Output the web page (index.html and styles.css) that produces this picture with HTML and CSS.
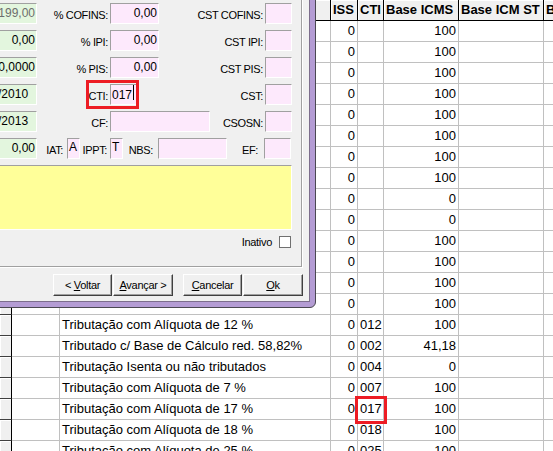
FILE: index.html
```html
<!DOCTYPE html>
<html lang="pt-BR">
<head>
<meta charset="utf-8">
<title>Tributação</title>
<link rel="stylesheet" href="styles.css">
</head>
<body>
<div class="grid">
  <div class="row head"><div class="c ind"></div><div class="c"></div><div class="c"></div><div class="c">ISS</div><div class="c">CTI</div><div class="c">Base ICMS</div><div class="c">Base ICM ST</div><div class="c">B</div></div>
  <div class="row"><div class="c ind"></div><div class="c"></div><div class="c"></div><div class="c r">0</div><div class="c"></div><div class="c r">100</div><div class="c"></div><div class="c"></div></div>
  <div class="row"><div class="c ind"></div><div class="c"></div><div class="c"></div><div class="c r">0</div><div class="c"></div><div class="c r">100</div><div class="c"></div><div class="c"></div></div>
  <div class="row"><div class="c ind"></div><div class="c"></div><div class="c"></div><div class="c r">0</div><div class="c"></div><div class="c r">100</div><div class="c"></div><div class="c"></div></div>
  <div class="row"><div class="c ind"></div><div class="c"></div><div class="c"></div><div class="c r">0</div><div class="c"></div><div class="c r">100</div><div class="c"></div><div class="c"></div></div>
  <div class="row"><div class="c ind"></div><div class="c"></div><div class="c"></div><div class="c r">0</div><div class="c"></div><div class="c r">100</div><div class="c"></div><div class="c"></div></div>
  <div class="row"><div class="c ind"></div><div class="c"></div><div class="c"></div><div class="c r">0</div><div class="c"></div><div class="c r">100</div><div class="c"></div><div class="c"></div></div>
  <div class="row"><div class="c ind"></div><div class="c"></div><div class="c"></div><div class="c r">0</div><div class="c"></div><div class="c r">100</div><div class="c"></div><div class="c"></div></div>
  <div class="row"><div class="c ind"></div><div class="c"></div><div class="c"></div><div class="c r">0</div><div class="c"></div><div class="c r">100</div><div class="c"></div><div class="c"></div></div>
  <div class="row"><div class="c ind"></div><div class="c"></div><div class="c"></div><div class="c r">0</div><div class="c"></div><div class="c r">0</div><div class="c"></div><div class="c"></div></div>
  <div class="row"><div class="c ind"></div><div class="c"></div><div class="c"></div><div class="c r">0</div><div class="c"></div><div class="c r">0</div><div class="c"></div><div class="c"></div></div>
  <div class="row"><div class="c ind"></div><div class="c"></div><div class="c"></div><div class="c r">0</div><div class="c"></div><div class="c r">100</div><div class="c"></div><div class="c"></div></div>
  <div class="row"><div class="c ind"></div><div class="c"></div><div class="c"></div><div class="c r">0</div><div class="c"></div><div class="c r">100</div><div class="c"></div><div class="c"></div></div>
  <div class="row"><div class="c ind"></div><div class="c"></div><div class="c"></div><div class="c r">0</div><div class="c"></div><div class="c r">100</div><div class="c"></div><div class="c"></div></div>
  <div class="row"><div class="c ind"></div><div class="c"></div><div class="c"></div><div class="c r">0</div><div class="c"></div><div class="c r">100</div><div class="c"></div><div class="c"></div></div>
  <div class="row"><div class="c ind"></div><div class="c"></div><div class="c">Tributação com Alíquota de 12 %</div><div class="c r">0</div><div class="c">012</div><div class="c r">100</div><div class="c"></div><div class="c"></div></div>
  <div class="row"><div class="c ind"></div><div class="c"></div><div class="c">Tributado c/ Base de Cálculo red. 58,82%</div><div class="c r">0</div><div class="c">002</div><div class="c r">41,18</div><div class="c"></div><div class="c"></div></div>
  <div class="row"><div class="c ind"></div><div class="c"></div><div class="c">Tributação Isenta ou não tributados</div><div class="c r">0</div><div class="c">004</div><div class="c r">0</div><div class="c"></div><div class="c"></div></div>
  <div class="row"><div class="c ind"></div><div class="c"></div><div class="c">Tributação com Alíquota de 7 %</div><div class="c r">0</div><div class="c">007</div><div class="c r">100</div><div class="c"></div><div class="c"></div></div>
  <div class="row"><div class="c ind"></div><div class="c"></div><div class="c">Tributação com Alíquota de 17 %</div><div class="c r">0</div><div class="c">017</div><div class="c r">100</div><div class="c"></div><div class="c"></div></div>
  <div class="row"><div class="c ind"></div><div class="c"></div><div class="c">Tributação com Alíquota de 18 %</div><div class="c r">0</div><div class="c">018</div><div class="c r">100</div><div class="c"></div><div class="c"></div></div>
  <div class="row"><div class="c ind"></div><div class="c"></div><div class="c">Tributação com Alíquota de 25 %</div><div class="c r">0</div><div class="c">025</div><div class="c r">100</div><div class="c"></div><div class="c"></div></div>
</div>

<div class="dialog">
  <div class="client">
    <div class="panel">
      <div class="frow">
        <div class="fld g f-green num dis">199,00</div>
        <div class="lbl l-a">% COFINS:</div>
        <div class="fld p f-mid num">0,00</div>
        <div class="lbl l-b">CST COFINS:</div>
        <div class="fld p f-sm"></div>
      </div>
      <div class="frow">
        <div class="fld g f-green num">0,00</div>
        <div class="lbl l-a">% IPI:</div>
        <div class="fld p f-mid num">0,00</div>
        <div class="lbl l-b">CST IPI:</div>
        <div class="fld p f-sm"></div>
      </div>
      <div class="frow">
        <div class="fld g f-green num">10,0000</div>
        <div class="lbl l-a">% PIS:</div>
        <div class="fld p f-mid num">0,00</div>
        <div class="lbl l-b">CST PIS:</div>
        <div class="fld p f-sm"></div>
      </div>
      <div class="frow">
        <div class="fld g f-green date">01/01/2010</div>
        <div class="lbl l-a">CTI:</div>
        <div class="fld p f-sm cti">017<span class="caret"></span></div>
        <div class="lbl l-cst">CST:</div>
        <div class="fld p f-sm"></div>
      </div>
      <div class="frow">
        <div class="fld g f-green date">01/01/2013</div>
        <div class="lbl l-a">CF:</div>
        <div class="fld p f-cf"></div>
        <div class="lbl l-csosn">CSOSN:</div>
        <div class="fld p f-sm"></div>
      </div>
      <div class="frow">
        <div class="fld g f-green num">0,00</div>
        <div class="lbl l-iat">IAT:</div>
        <div class="fld p f-ch top">A</div>
        <div class="lbl l-ippt">IPPT:</div>
        <div class="fld p f-ch top">T</div>
        <div class="lbl l-nbs">NBS:</div>
        <div class="fld p f-nbs"></div>
        <div class="lbl l-ef">EF:</div>
        <div class="fld p f-sm"></div>
      </div>
      <div class="memo"></div>
      <div class="chkrow">
        <span class="chklbl">Inativo</span>
        <span class="chk"></span>
      </div>
    </div>
    <div class="btns">
      <div class="btn b59">&lt; <u>V</u>oltar</div>
      <div class="btn b60 adj"><u>A</u>vançar &gt;</div>
      <div class="btn b59 sep"><u>C</u>ancelar</div>
      <div class="btn b60 adj"><u>O</u>k</div>
    </div>
  </div>
</div>

<div class="mark mark-dlg"></div>
<div class="mark mark-grid"></div>
</body>
</html>
```

FILE: styles.css
```css
* { box-sizing: border-box; }
html, body { margin: 0; padding: 0; }
body {
  width: 553px;
  height: 451px;
  overflow: hidden;
  position: relative;
  background: #fff;
  font-family: "Liberation Sans", Arial, sans-serif;
  color: #000;
}

/* ---------- grid ---------- */
.grid { width: 624px; font-size: 13px; }
.row {
  display: grid;
  grid-template-columns: 12px 48px 271px 27px 26px 75px 85px 80px;
  height: 21px;
}
.c {
  border-right: 1px solid #c0c0c0;
  border-bottom: 1px solid #c0c0c0;
  line-height: 20px;
  padding: 0 2px;
  white-space: nowrap;
  overflow: hidden;
}
.r { text-align: right; }
.head .c {
  background: #f0f0f0;
  border-color: #000;
  font-weight: bold;
  box-shadow: inset 1px 1px #fff;
}
.row .ind {
  background: #f0f0f0;
  border-right-color: #000;
  border-bottom-color: #404040;
  box-shadow: inset 1px 1px #fff;
}

/* ---------- dialog ---------- */
.dialog {
  position: absolute;
  left: -57px;
  top: -37px;
  background: #b49cd4;
  border: 1px solid #4b4852;
  border-radius: 0 0 6px 0;
  padding: 5px;
}
.client {
  background: #f0f0f0;
  border: 1px solid #7c6d8c;
  padding: 10px 6px 5px 5px;
  font-size: 11px;
}
.panel {
  width: 348px;
  height: 288px;
  border: 1px solid;
  border-color: #a0a0a0 #fff #fff #a0a0a0;
  box-shadow: inset 1px 1px #fff, inset -1px -1px #a0a0a0;
  padding: 22px 10px 0 9px;
  display: flex;
  flex-direction: column;
  gap: 6px;
}
.frow { display: flex; height: 21px; flex: none; }
.lbl {
  flex: none;
  height: 21px;
  line-height: 24px;
  text-align: right;
  letter-spacing: -0.35px;
  white-space: nowrap;
}
.l-a { width: 73px; padding-right: 2px; }
.l-b { width: 106px; padding-right: 2px; }
.l-cst { width: 128px; padding-right: 2px; }
.l-csosn { width: 55px; padding-right: 2px; }
.l-iat { width: 30px; padding-right: 4px; }
.l-ippt { width: 30px; padding-right: 3px; }
.l-nbs { width: 35px; padding-right: 5px; }
.l-ef { width: 37px; padding-right: 6px; }

.fld {
  flex: none;
  height: 21px;
  border: 1px solid;
  border-color: #a0a0a0 #fff #fff #a0a0a0;
  font-size: 12px;
  line-height: 19px;
  padding: 0 1px;
  white-space: nowrap;
  overflow: hidden;
}
.g { background: #e3f6de; }
.p { background: #fde9fc; }
.num { text-align: right; }
.dis { color: #6d6d6d; }
.date { padding-left: 2px; }
.top { line-height: 14px; padding-top: 1px; }
.f-green { width: 72px; }
.f-mid { width: 49px; }
.f-sm { width: 27px; }
.f-cf { width: 100px; }
.f-ch { width: 13px; }
.f-nbs { width: 69px; }
.caret {
  display: inline-block;
  width: 1px;
  height: 15px;
  background: #000;
  vertical-align: -1px;
  margin-left: 1px;
}

.memo {
  flex: none;
  height: 65px;
  background: #ffff99;
  border: 1px solid;
  border-color: #a0a0a0 #fff #fff #a0a0a0;
}
.chkrow {
  flex: none;
  display: flex;
  justify-content: flex-end;
  align-items: center;
  height: 12px;
  padding-right: 1px;
  gap: 7px;
}
.chklbl { line-height: 12px; letter-spacing: -0.3px; }
.chk {
  width: 12px;
  height: 12px;
  background: #fff;
  border: 1px solid #707070;
}

.btns {
  display: flex;
  justify-content: flex-end;
  margin-top: 6px;
  height: 22px;
}
.btn {
  height: 22px;
  background: #f0f0f0;
  border: 1px solid;
  border-color: #fff #404040 #404040 #fff;
  box-shadow: inset -1px -1px #a0a0a0;
  text-align: center;
  line-height: 20px;
  letter-spacing: -0.3px;
  white-space: nowrap;
}
.b59 { width: 59px; }
.b60 { width: 60px; }
.adj { margin-left: 1px; }
.sep { margin-left: 10px; }

/* ---------- annotation marks ---------- */
.mark {
  position: absolute;
  border: 3px solid #ed1c24;
}
.mark-dlg { left: 86px; top: 80px; width: 53px; height: 29px; }
.mark-grid { left: 355px; top: 396px; width: 32px; height: 28px; }
```
